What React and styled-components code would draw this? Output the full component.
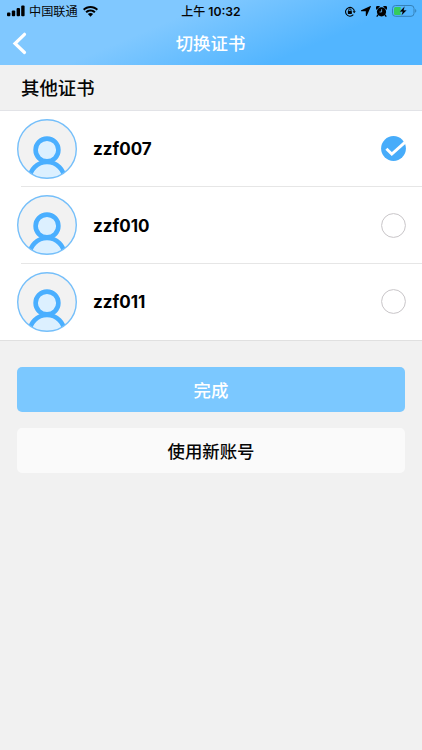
// External modules
import React, { useState } from 'react';
import styled, { createGlobalStyle } from 'styled-components';

const GlobalStyle = createGlobalStyle`
    * {
        box-sizing: border-box;
    }

    body {
        margin: 0;
        background-color: #f1f1f1;
        font-family: Inter, 'Noto Sans CJK SC', sans-serif;
        color: #060606;
    }
`;

const Screen = styled.div`
    display: flex;
    flex-direction: column;
    min-height: 100vh;
    background-color: #f1f1f1;
`;

const Header = styled.header`
    height: 65px;
    background: linear-gradient(157deg, #80c8ff 0%, #80c8ff 38%, #52b5ff 73%, #52b5ff 100%);
`;

const StatusBar = styled.div`
    display: grid;
    grid-template-columns: 1fr auto 1fr;
    align-items: center;
    height: 22px;
    padding: 0 5px 0 7px;
`;

const StatusLeft = styled.div`
    display: flex;
    align-items: center;
`;

const Carrier = styled.span`
    margin: 0 5px 0 4px;
    padding-top: 1px;
    font-size: 12.2px;
    line-height: 21px;
`;

const Clock = styled.span`
    display: flex;
    gap: 3px;
    margin-right: 2px;
    padding-top: 1px;
    font-size: 12.2px;
    font-weight: 600;
    line-height: 21px;
`;

const ClockPeriod = styled.span`
    font-size: 12px;
    font-weight: 500;
`;

const StatusRight = styled.div`
    display: flex;
    justify-content: flex-end;
    align-items: center;
    gap: 5px;
`;

const NavBar = styled.div`
    display: grid;
    grid-template-columns: 60px 1fr 61px;
    align-items: center;
    height: 43px;
`;

const BackButton = styled.button`
    display: flex;
    height: 43px;
    padding: 10px 0 0 12px;
    border: none;
    background: none;
    cursor: pointer;
`;

const Title = styled.h1`
    margin: 0;
    font-size: 17.4px;
    font-weight: 500;
    line-height: 42px;
    text-align: center;
    color: #fff;
`;

const SectionTitle = styled.h2`
    height: 45.5px;
    margin: 0;
    padding-left: 21px;
    border-bottom: 1px solid #e2e3e7;
    font-size: 18.4px;
    font-weight: 500;
    line-height: 46px;
`;

const List = styled.div`
    background-color: #fff;
    border-bottom: 1px solid #e0e0e0;
`;

const Row = styled.div`
    display: flex;
    align-items: center;
    height: 76.5px;
    padding-left: 16.5px;
    cursor: pointer;
`;

const RowBody = styled.div`
    display: flex;
    justify-content: space-between;
    align-items: center;
    flex: 1;
    height: 100%;
    padding: 0 16.5px 0 16.5px;
`;

const Divider = styled.div`
    height: 1px;
    margin: -1px 0 0 21px;
    background-color: #e6e6e6;
`;

const Name = styled.span`
    padding-top: 1px;
    font-size: 17px;
    font-weight: 650;
    color: #000;
`;

const Actions = styled.div`
    display: flex;
    flex-direction: column;
    gap: 16px;
    padding: 26px 17px 0;
`;

const ActionButton = styled.button`
    height: 45px;
    padding: 0;
    border: none;
    border-radius: 5px;
    background-color: ${props => props.$primary ? '#7bc8ff' : '#fafafa'};
    color: ${props => props.$primary ? '#fff' : '#060606'};
    font-family: inherit;
    font-size: 17.4px;
    font-weight: 500;
    cursor: pointer;
`;

const SignalIcon = () => (
    <svg width="18" height="12" viewBox="0 0 18 12">
        <rect x="0" y="7.4" width="3.4" height="3.8" rx="1" />
        <rect x="4.8" y="5.5" width="3.4" height="5.7" rx="1" />
        <rect x="9.6" y="3" width="3.4" height="8.2" rx="1" />
        <rect x="14.2" y="0.4" width="3.4" height="10.8" rx="1" />
    </svg>
);

const WifiIcon = () => (
    <svg width="15" height="11" viewBox="0 0 15 11">
        <path d="M7.5 0C4.6 0 2 1.1 0 3L1.3 4.4C2.9 2.9 5.1 2 7.5 2s4.6.9 6.2 2.4L15 3C13 1.1 10.4 0 7.5 0Z" />
        <path d="M7.5 3.5c-2 0-3.8.8-5.1 2l1.4 1.4c1-.9 2.3-1.5 3.7-1.5s2.7.6 3.7 1.5l1.4-1.4c-1.3-1.2-3.1-2-5.1-2Z" />
        <path d="M7.5 7c-1 0-2 .4-2.6 1l2.6 2.7L10.1 8c-.6-.6-1.6-1-2.6-1Z" />
    </svg>
);

const RotationLockIcon = () => (
    <svg width="11" height="11" viewBox="0.5 0 11.5 11" fill="none" stroke="#000">
        <path d="M9.2 8.8A4.6 4.6 0 1 1 10.3 5.4" strokeWidth="1.1" />
        <path d="M8.4 5.2h3.4L10.1 7.4Z" fill="#000" stroke="none" />
        <rect x="3.5" y="5" width="4.2" height="3" rx=".4" fill="#000" stroke="none" />
        <path d="M4.4 5V3.9a1.2 1.2 0 0 1 2.4 0V5" strokeWidth=".9" />
    </svg>
);

const LocationIcon = () => (
    <svg width="10" height="10" viewBox="0 0 10 10">
        <path d="M9.5.1.2 4.2c-.5.3-.3 1 .2 1h4.4v4.4c0 .5.7.6 1 .1L9.9.6C10 .3 9.8 0 9.5.1Z" />
    </svg>
);

const AlarmIcon = () => (
    <svg width="11" height="11" viewBox="0 0 11 11">
        <path d="M.6 3.4A2 2 0 0 1 3.5.5ZM10.4 3.4A2 2 0 0 0 7.5.5Z" stroke="#000" strokeWidth=".6" />
        <circle cx="5.5" cy="5.8" r="4.6" />
        <path d="m2.3 8.5-1.2 1.7M8.7 8.5l1.2 1.7" stroke="#000" strokeWidth="1.3" strokeLinecap="round" />
        <path d="M5.6 3.2V6H3.5" fill="none" stroke="#65beff" strokeWidth=".8" />
    </svg>
);

const BatteryIcon = () => (
    <svg width="25" height="12" viewBox="0 0 25 12">
        <rect x=".5" y=".5" width="21.5" height="10.8" rx="3" fill="none" stroke="#3581b8" />
        <path d="M3.5 2H8.6v7.9H3.5A1.5 1.5 0 0 1 2 8.4V3.5A1.5 1.5 0 0 1 3.5 2Z" fill="#35cb5c" />
        <path d="M12.7 1.3 7.6 6.7h2.9L9.5 10.6 14.7 5.2h-3Z" stroke="#65beff" strokeWidth=".2" />
        <path d="M23.2 4.1c1.5.6 1.5 3.1 0 3.7Z" fill="#3581b8" />
    </svg>
);

const BackIcon = () => (
    <svg width="16" height="23" viewBox="0 0 16 23">
        <path d="M12.5 2.3 3 11.5l9.5 9" fill="none" stroke="#fff" strokeWidth="3.2" strokeLinecap="round" />
    </svg>
);

const Avatar = () => (
    <svg width="60" height="60" viewBox="0 0 60 60">
        <defs>
            <clipPath id="avatar-clip">
                <circle cx="30" cy="30" r="29.4" />
            </clipPath>
        </defs>
        <circle cx="30" cy="30" r="29.4" fill="#f2f2f2" />
        <g clipPath="url(#avatar-clip)" fill="#dcf0ff" stroke="#4aafff" strokeWidth="4.6">
            <circle cx="30" cy="60.5" r="17.5" />
            <circle cx="30" cy="31" r="11.4" />
        </g>
        <circle cx="30" cy="30" r="29.3" fill="none" stroke="#75bffa" strokeWidth="1.4" />
    </svg>
);

const RadioMark = ({ checked }) => (
    <svg width="25" height="25" viewBox="0 0 25 25">
        {checked ? (
            <>
                <circle cx="12.5" cy="12.5" r="12.4" fill="#47acfa" />
                <path d="M5.4 12.8 10.8 18 23.9 6.3" fill="none" stroke="#fff" strokeWidth="2.9" />
            </>
        ) : (
            <circle cx="12.5" cy="12.5" r="11.9" fill="#fff" stroke="#c8c5c8" />
        )}
    </svg>
);

const accounts = ['zzf007', 'zzf010', 'zzf011'];

const App = () => {
    const [selected, setSelected] = useState('zzf007');

    return (
        <Screen>
            <GlobalStyle />
            <Header>
                <StatusBar>
                    <StatusLeft>
                        <SignalIcon />
                        <Carrier>中国联通</Carrier>
                        <WifiIcon />
                    </StatusLeft>
                    <Clock>
                        <ClockPeriod>上午</ClockPeriod>
                        10:32
                    </Clock>
                    <StatusRight>
                        <RotationLockIcon />
                        <LocationIcon />
                        <AlarmIcon />
                        <BatteryIcon />
                    </StatusRight>
                </StatusBar>
                <NavBar>
                    <BackButton>
                        <BackIcon />
                    </BackButton>
                    <Title>切换证书</Title>
                </NavBar>
            </Header>
            <SectionTitle>其他证书</SectionTitle>
            <List>
                {accounts.map((name, index) => (
                    <React.Fragment key={name}>
                        {index > 0 && <Divider />}
                        <Row onClick={() => setSelected(name)}>
                            <Avatar />
                            <RowBody>
                                <Name>{name}</Name>
                                <RadioMark checked={selected === name} />
                            </RowBody>
                        </Row>
                    </React.Fragment>
                ))}
            </List>
            <Actions>
                <ActionButton $primary>完成</ActionButton>
                <ActionButton>使用新账号</ActionButton>
            </Actions>
        </Screen>
    );
}

export default App;
